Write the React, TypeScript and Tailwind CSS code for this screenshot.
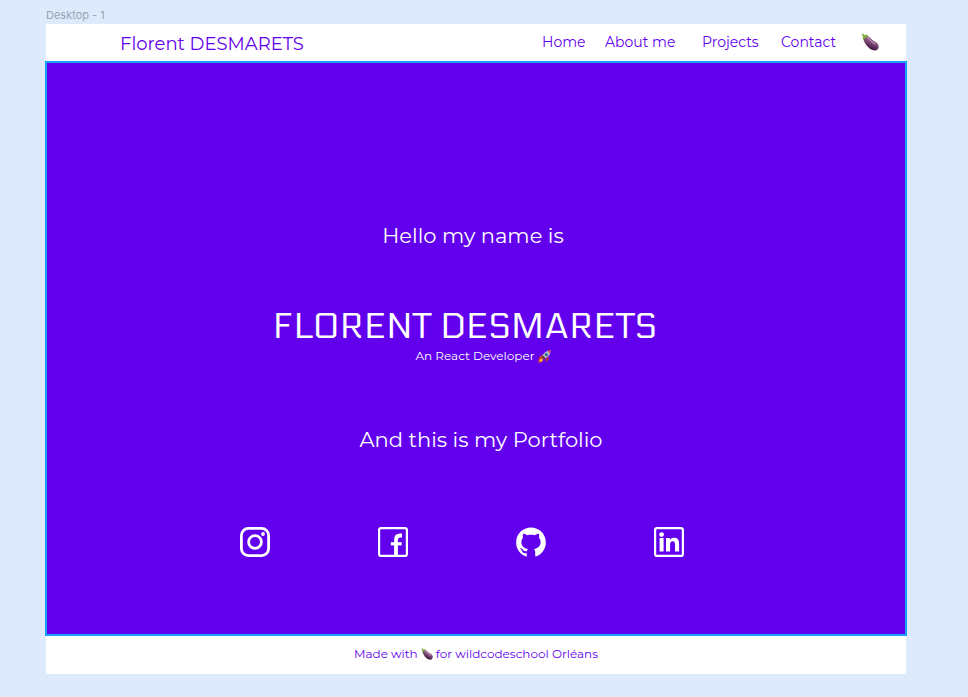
import { AiFillGithub } from "react-icons/ai";

const links = ["Home", "About me", "Projects", "Contact"];

function Instagram() {
  return (
    <svg viewBox="0 0 30 30" className="size-[30px]" fill="none" stroke="currentColor" strokeWidth="2.8">
      <rect x="1.4" y="1.4" width="27.2" height="27.2" rx="7" />
      <circle cx="15" cy="15" r="6.4" />
      <circle cx="23" cy="7" r="1.9" fill="currentColor" stroke="none" />
    </svg>
  );
}

function Facebook() {
  return (
    <svg viewBox="0 0 30 30" className="size-[30px]" fill="none" stroke="currentColor" strokeWidth="2.2">
      <rect x="1.1" y="1.1" width="27.8" height="27.8" rx="2" />
      <path d="M18 29V13c0-3 1.500-4.500 4-4.500h2" strokeWidth="3.8" />
      <path d="M12.800 16.800h10.800" strokeWidth="3.2" />
    </svg>
  );
}

function Linkedin() {
  return (
    <svg viewBox="0 0 30 30" className="size-[30px]" fill="currentColor">
      <rect x="1.1" y="1.1" width="27.8" height="27.8" rx="2" fill="none" stroke="currentColor" strokeWidth="2.2" />
      <circle cx="7.6" cy="7.600" r="2.4" />
      <path d="M5.600 11h4v13.600h-4zM12 11h3.900v1.800c.9-1.400 2.200-2.100 4-2.100 3.400 0 5.200 2 5.200 5.800v8.100h-4.100v-7.400c0-2-.7-3-2.200-3-1.700 0-2.700 1.100-2.700 3.100v7.300h-4.100z" />
    </svg>
  );
}

const socials = [
  { name: "Instagram", icon: <Instagram /> },
  { name: "Facebook", icon: <Facebook /> },
  { name: "GitHub", icon: <AiFillGithub size={34} /> },
  { name: "LinkedIn", icon: <Linkedin /> },
];

function Eggplant({ className }: { className: string }) {
  return (
    <svg viewBox="0 0 36 36" className={className} role="img" aria-label="Eggplant">
      <defs>
        <linearGradient id="skin" x1="0.7" y1="0.1" x2="0.35" y2="0.85">
          <stop offset="0" stopColor="#a678a0" />
          <stop offset="0.45" stopColor="#85507f" />
          <stop offset="1" stopColor="#3c1740" />
        </linearGradient>
      </defs>
      <path
        d="M4 9C5 16 9 24 16 30c5 4 13 7 17 3 4-4 3-10-2-14-5-3-9-5-12-9-2-3-6-5-9-5z"
        fill="url(#skin)"
      />
      <path d="M14 9c3 6 8 9 14 13" stroke="#c9a5c5" strokeWidth="2" fill="none" strokeLinecap="round" />
      <path d="M1 3l3-2 3 3c3-1 6 0 8 2l-4 1 1 4-4-2-3 5c-2-3-2-5-1-8z" fill="#7eb23f" />
    </svg>
  );
}

function Rocket({ className }: { className: string }) {
  return (
    <svg viewBox="0 0 36 36" className={className} role="img" aria-label="Rocket">
      <path d="M14 13l-9 4-4 9 10-3zM22 24l-1 10 7-6 3-10z" fill="#c92f2a" />
      <path d="M9 21c-6 2-8 7-8 14 7 0 12-2 14-8z" fill="#e8501e" />
      <path d="M10 24c-4 1-5 4-5 8 4 0 7-1 8-5z" fill="#ffd34d" />
      <path d="M35 1C24 1 17 7 10 19l7 7C29 19 35 12 35 1z" fill="#b9c0c4" />
      <path d="M10 19l7 7 4-3-7-8z" fill="#6b3030" />
      <path d="M35 1c-4 0-6 1-8 2l6 6c1-3 2-5 2-8z" fill="#d43b35" />
      <circle cx="23" cy="13" r="4" fill="#26648f" />
    </svg>
  );
}

export default function App() {
  return (
    <div className="min-h-screen bg-[#ddeafc] pt-[7px] pr-[62px] pb-6 pl-[46px] font-['Montserrat','Inter',sans-serif] text-[#6200ee]">
      <p className="mb-px h-4 font-['Inter',sans-serif] text-[11px] leading-4 text-[#98a5b3]">Desktop - 1</p>

      <header className="flex h-[38px] items-center justify-between bg-white pr-[26px] pl-[74px]">
        <a href="#home" className="pt-0.5 text-lg">
          Florent DESMARETS
        </a>
        <nav className="grid grid-cols-[63px_97px_79px_80px_19px] items-center pb-0.5 text-sm leading-5">
          {links.map((link) => (
            <a key={link} href="#home" className="whitespace-nowrap">
              {link}
            </a>
          ))}
          <Eggplant className="size-[18px]" />
        </nav>
      </header>

      <main className="flex h-[573px] flex-col items-center bg-[#6200ee] pt-[158px] text-white outline-2 -outline-offset-1 outline-[#18a0fb]">
        <p className="pr-1.5 text-[21px] leading-8">Hello my name is</p>
        <h1 className="mt-[54px] pr-[22px] font-['Electrolize','Roboto',sans-serif] text-4xl leading-[42px]">
          FLORENT DESMARETS
        </h1>
        <p className="flex items-center gap-[3px] pl-[14px] text-xs leading-4">
          An React Developer <Rocket className="size-[13px]" />
        </p>
        <p className="mt-15 pl-2.5 text-[21px] leading-8">And this is my Portfolio</p>
        <ul className="mt-[67px] flex gap-[100px] pr-7">
          {socials.map(({ name, icon }) => (
            <li key={name}>
              <a href="#home" aria-label={name} className="flex size-[38px] items-center justify-center">
                {icon}
              </a>
            </li>
          ))}
        </ul>
      </main>

      <footer className="flex h-[39px] items-center justify-center gap-[3px] bg-white pb-0.5 text-xs">
        Made with <Eggplant className="size-3" /> for wildcodeschool Orléans
      </footer>
    </div>
  );
}
